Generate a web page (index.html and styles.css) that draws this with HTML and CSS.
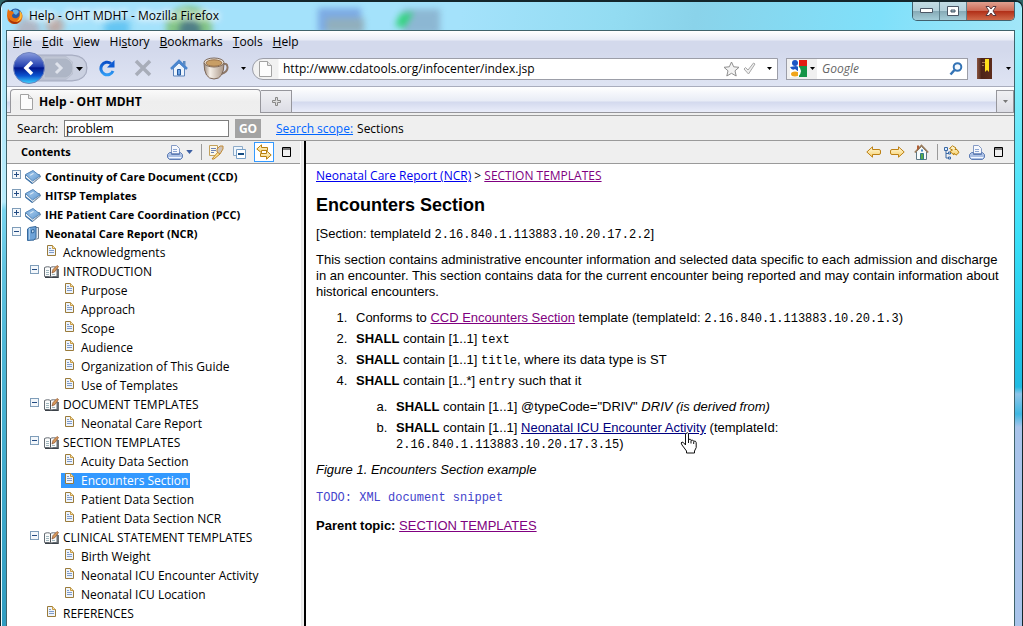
FILE: index.html
```html
<!DOCTYPE html>
<html lang="en">
<head>
<meta charset="utf-8">
<title>Help - OHT MDHT</title>
<link rel="stylesheet" href="styles.css">
</head>
<body>
<svg class="defs" aria-hidden="true">
  <defs>
    <linearGradient id="book-blue" x1="0" y1="0" x2="1" y2="1"><stop offset="0" stop-color="#7fb0de"/><stop offset=".5" stop-color="#8db9e3"/><stop offset="1" stop-color="#5e95cc"/></linearGradient>
    <linearGradient id="gold" x1="0" y1="0" x2="0" y2="1"><stop offset="0" stop-color="#fffbe0"/><stop offset="1" stop-color="#f7cf6a"/></linearGradient>
    <linearGradient id="reload-blue" x1="0" y1="0" x2="0" y2="1"><stop offset="0" stop-color="#0a50c8"/><stop offset="1" stop-color="#2f9bf5"/></linearGradient>
    <linearGradient id="back-blue" x1="0" y1="0" x2="0" y2="1"><stop offset="0" stop-color="#8c9ede"/><stop offset=".45" stop-color="#2340b0"/><stop offset=".5" stop-color="#03178c"/><stop offset=".75" stop-color="#0a54cf"/><stop offset="1" stop-color="#3fd8ff"/></linearGradient>
    <linearGradient id="brown" x1="0" y1="0" x2="1" y2="0"><stop offset="0" stop-color="#8a5540"/><stop offset=".3" stop-color="#4d2418"/><stop offset="1" stop-color="#5d2c1c"/></linearGradient>
    <linearGradient id="cup-body" x1="0" y1="0" x2="1" y2="0"><stop offset="0" stop-color="#9c8a7c"/><stop offset=".3" stop-color="#f5efe8"/><stop offset="1" stop-color="#a99585"/></linearGradient>
  </defs>
  <symbol id="i-book" viewBox="0 0 16 14"><path d="M.5 5v3l7 5.500 8-6.500-1-2.500z" fill="#f2f4f6" stroke="#5d7e9e"/><path d="m.5 8 7 5.500" stroke="#3d74ab" stroke-width="1.300"/><path d="M.5 4.500 8 .5l7 5.500-7.500 5z" fill="url(#book-blue)" stroke="#5588bb"/><path d="m4.500 5 3.500-2 1 .8-3.500 2z" fill="#dceaf7"/><path d="m8.500 12 6-4.500" stroke="#9aa7b5" fill="none"/></symbol>
  <symbol id="i-bookopen" viewBox="0 0 12 15"><path d="M6.500 1.500h5v11l-6 1.500z" fill="#e4e9ef" stroke="#707d8c"/><path d="m.5 3 2-1.500L9 .5v11L7 14 .5 14.500z" fill="#6ea3d8" stroke="#37699c"/><path d="M2.500 2v11.500" stroke="#a9cbea"/><path d="M4.500 4 7 3.500v3l-2.500.5z" fill="#c7def3" stroke="#37699c"/></symbol>
  <symbol id="i-page" viewBox="0 0 9 11"><path d="M.5.5h5l3 3v7h-8z" fill="#eef4fc" stroke="#9a7b3a"/><path d="M5.500.5v3h3" fill="#f5e3ad" stroke="#c79a46"/><path d="M2 5.500h5M2 7.500h5M2 3.500h2" stroke="#7f9bc9"/></symbol>
  <symbol id="i-toc" viewBox="0 0 15 13"><path d="M1 12.500h5.500l1 .5 1-.5H14V4" stroke="#3b4148" stroke-width="1.500" fill="none"/><path d="M.5 2.500c2-1 4.500-1 6 0 1.500-1 4-1 6.500 0v9H8.500l-1.500.5-1.500-.5h-5z" fill="#fafbfb" stroke="#666c73"/><path d="M6.500 2.500v9" stroke="#4e5055"/><path d="M2 5.500h3M2 7.500h3M2 9.500h3M8 9.500h3" stroke="#9fb6bd"/><path d="m8 8 1-3.500L13 .5l1.500 1-3.500 5z" fill="#d99a5b" stroke="#89502c" stroke-width=".7"/></symbol>
  <symbol id="i-print" viewBox="0 0 16 15"><path d="M4.500.5h5l3 3v5h-8z" fill="#f6f8fd" stroke="#849ac4"/><path d="M6 4.500h4M6 6.500h4" stroke="#8ba6d3"/><path d="M2.500 7.500h2v2h8v-2h1l2 2v3l-2 2H2.500l-2-2v-3z" fill="#abc0e4" stroke="#5f7db4"/><path d="M2 12.500h12" stroke="#f4f8ff"/></symbol>
  <symbol id="i-left" viewBox="0 0 15 12"><path d="M6.500.8v2.700h6.500q1.500 0 1.500 1.500v2q0 1.500-1.500 1.500H6.500v2.700L.8 6z" fill="url(#gold)" stroke="#bd8115"/></symbol>
  <symbol id="i-right" viewBox="0 0 15 12"><path d="M8.500.8v2.700H2Q.5 3.500.5 5v2Q.5 8.500 2 8.500h6.500v2.700L14.200 6z" fill="url(#gold)" stroke="#bd8115"/></symbol>
  <symbol id="i-max" viewBox="0 0 9 10"><path d="M.5.5h8v9h-8zM1 2h7" fill="none" stroke="#000"/></symbol>
  <symbol id="i-drop" viewBox="0 0 5 3"><path d="M0 0h5L2.500 3z" fill="currentColor"/></symbol>
  <symbol id="i-sheet" viewBox="0 0 13 16"><path d="M.5.5h8l4 4v11H.5z" fill="#fcfcfc" stroke="#a2a2a2"/><path d="M8.500.5v4h4" fill="#e6e6e6" stroke="#a2a2a2"/></symbol>
</svg>

<div class="window">
  <header class="titlebar">
    <svg class="blobs" width="480" height="30" aria-hidden="true">
      <g class="soft"><circle cx="28" cy="30" r="12" fill="#b4a9b4"/><circle cx="55" cy="26" r="9" fill="#c49b8f"/><circle cx="117" cy="28" r="13" fill="#51bdf0"/><circle cx="189" cy="29" r="23" fill="#79bc60"/><circle cx="190" cy="30" r="11" fill="#335e60"/><path d="M318 8h43v25h-43z" fill="#6f98dd"/><path d="M326 18h38v15h-38z" fill="#8b9ea9"/><path d="M403 9h37v25h-37z" fill="#85a9c6"/><path d="m395 26 5-12 14-2-10 16z" fill="#10cf58"/></g>
    </svg>
    <svg class="fox" viewBox="0 0 16 16" width="16" height="16" aria-hidden="true"><circle cx="8.500" cy="7" r="6.500" fill="#285aa6"/><path d="M6 2q4-1.500 6 2l-3 3-3-2z" fill="#67b5e6"/><path d="M1 1q1 2 3 2 2 0 3 2l-2 2q0 4 5 3 4-2 2-7 4 2 3.500 6-1 7-8 7T0 8Q0 4 1 1z" fill="#e8700f"/><path d="M1 8q1 5 7 6 4 0 6-4-1 6-7 6-5-1-6-8z" fill="#a93408"/><path d="M13 3q3 3 1 8-2 3-5 3 5-3 4-11z" fill="#ffc03b"/></svg>
    <span class="caption">Help - OHT MDHT - Mozilla Firefox</span>
    <div class="winctl">
      <button class="wbtn" aria-label="Minimize"><svg width="13" height="6"><path d="M.5.5h12v4H.5z" fill="#fff" stroke="#4b5766"/></svg></button>
      <button class="wbtn" aria-label="Maximize"><svg width="12" height="10"><path d="M.5.5h11v9H.5zM4 4h4v2H4z" fill="#fff" stroke="#4b5766" fill-rule="evenodd"/></svg></button>
      <button class="wbtn close" aria-label="Close"><svg width="12" height="10"><path d="M1 .5h3l2 2.500 2-2.500h3L8 5l3 4.500H8L6 7 4 9.500H1L4 5z" fill="#fff" stroke="#573940"/></svg></button>
    </div>
  </header>

  <div class="client">
    <nav class="menubar">
      <button><u>F</u>ile</button><button><u>E</u>dit</button><button><u>V</u>iew</button><button>Hi<u>s</u>tory</button><button><u>B</u>ookmarks</button><button><u>T</u>ools</button><button><u>H</u>elp</button>
    </nav>

    <div class="navbar">
      <div class="navbtns">
        <button aria-label="Back and forward"><svg width="78" height="34" viewBox="0 0 78 34"><path d="M16 4h46q15 1 15 13T62 30H16z" fill="#b9bfd0" stroke="#a5abc0"/><path d="M50 29h12q14-1 14-12T62 5H56l7 6v12l-7 6z" fill="#cbd1e1"/><path d="M34 7h22q7 3 7 10t-7 10H34z" fill="#aeb6c6" stroke="#c4cad7"/><path d="m46 12 5 5-5 5" fill="none" stroke="#dfe3ec" stroke-width="3"/><path d="M66 16h7l-3.500 4z"/><circle cx="19" cy="17" r="15.500" fill="url(#back-blue)" stroke="#6f82bd"/><path d="m22 11-6 6 6 6" fill="none" stroke="#fff" stroke-width="3.500"/></svg></button>
        <button aria-label="Reload"><svg width="18" height="18" viewBox="0 0 18 18"><path d="M13 4.500A6.300 6.300 0 1 0 15 12" fill="none" stroke="url(#reload-blue)" stroke-width="3"/><path d="M16.500 1v7.500H9z" fill="#0d5bd2"/></svg></button>
        <button aria-label="Stop"><svg width="18" height="18" viewBox="0 0 18 18"><path d="m2 2 14 14M16 2 2 16" stroke="#a8adb9" stroke-width="3.500"/></svg></button>
        <button aria-label="Home"><svg width="18" height="18" viewBox="0 0 18 18"><path d="M3.500 9v8h11V9L9 4z" fill="#edf4fc" stroke="#5a82ba"/><path d="m1 10 8-8 8 8" fill="none" stroke="#4a86cf" stroke-width="2.500"/><path d="M13 2h2.500v5L13 4.500z" fill="#5d8ac0"/><path d="M7.500 10.500h3V16h-3z" fill="#6ca3e4" stroke="#24599f"/></svg></button>
        <button aria-label="Coffee"><svg width="26" height="23" viewBox="0 0 26 23"><path d="M19 8q5-3 5.500 2T18 17" fill="none" stroke="#8d7768" stroke-width="2"/><path d="M1 6q0 16 10 16T21 6z" fill="url(#cup-body)" stroke="#7b6759"/><ellipse cx="11" cy="5.500" rx="10" ry="4.500" fill="#efe8df" stroke="#7b6759"/><ellipse cx="11" cy="6" rx="8" ry="3.200" fill="#c89e65" stroke="#987048"/></svg></button>
        <button aria-label="Coffee menu"><svg width="5" height="3"><use href="#i-drop"/></svg></button>
      </div>
      <div class="address">
        <svg width="13" height="16"><use href="#i-sheet"/></svg>
        <input aria-label="Address" value="http://www.cdatools.org/infocenter/index.jsp">
        <svg width="17" height="16" viewBox="0 0 17 16"><path d="m8.500 1 2.200 4.800 5.300.5-4 3.500 1.200 5.200-4.700-2.700L3.800 15 5 9.800 1 6.300l5.300-.5z" fill="#f3f3f3" stroke="#8e8e8e"/></svg>
        <svg width="13" height="13" viewBox="0 0 13 13"><path d="m1 7 1.500-1.500L5 8l5.500-7L12 2 5.500 12z" fill="#efefef" stroke="#a6a6a6"/></svg>
        <svg class="addr-drop" width="5" height="3"><use href="#i-drop"/></svg>
      </div>
      <div class="gsearch">
        <button class="engine" aria-label="Search engine"><svg width="17" height="17" viewBox="0 0 17 17"><path d="M9 0h8v6H9z" fill="#e31b12"/><path d="M8 6h9v11H8z" fill="#159447"/><path d="M0 0h9v17H0z" fill="#fff"/><circle cx="5" cy="3" r="3" fill="#1d55c5"/><path d="M0 7q2 4 5 2l4 3V7L6 6z" fill="#1d55c5"/><ellipse cx="5" cy="14" rx="4" ry="2.500" fill="#f0a51c"/><path d="M8 6q3 2 3 5t-3 6z" fill="#fff"/></svg><svg width="5" height="3"><use href="#i-drop"/></svg></button>
        <input aria-label="Google" placeholder="Google">
        <svg width="14" height="14" viewBox="0 0 14 14"><circle cx="8.500" cy="5" r="3.800" fill="#f4f9ff" stroke="#3373b5" stroke-width="2"/><path d="m5.500 8-4 4.500" stroke="#3373b5" stroke-width="2.500"/></svg>
      </div>
      <button class="diary" aria-label="Bookmarks"><svg width="16" height="21" viewBox="0 0 16 21"><path d="M0 0h15v21H0z" fill="url(#brown)"/><path d="M5 4h3v1H5zm0 3h2v1H5z" fill="#a87b55"/><path d="M8 1h4v13l-2-2-2 2z" fill="#ffe11c"/></svg></button>
      <button aria-label="More"><svg width="5" height="3"><use href="#i-drop"/></svg></button>
    </div>

    <div class="tabbar">
      <button class="tab"><svg width="13" height="16"><use href="#i-sheet"/></svg>Help - OHT MDHT</button>
      <button class="newtab" aria-label="New tab"><svg width="9" height="9" viewBox="0 0 9 9"><path d="M3.500.5h2v3h3v2h-3v3h-2v-3h-3v-2h3z" fill="#ddd" stroke="#888"/></svg></button>
      <button class="alltabs" aria-label="All tabs"><svg width="5" height="3"><use href="#i-drop"/></svg></button>
    </div>

    <form class="searchbar" onsubmit="return false">
      <label for="q">Search:</label>
      <input id="q" value="problem">
      <button>GO</button>
      <a href="#scope">Search scope:</a>
      <span>Sections</span>
    </form>

    <div class="panes">
      <aside class="contents">
        <div class="toolbar">
          <h2>Contents</h2>
          <button aria-label="Print topics"><svg width="16" height="15"><use href="#i-print"/></svg><svg class="blue" width="7" height="4" viewBox="0 0 5 3"><use href="#i-drop"/></svg></button>
          <span class="sep"></span>
          <button aria-label="Search topics"><svg width="16" height="15" viewBox="0 0 16 15"><path d="M1.500.5h8v10h-8z" fill="#fbf7e9" stroke="#c3a15c"/><path d="M3 3.500h5M3 5.500h5M3 7.500h3" stroke="#6e83b5"/><path d="m4 14 6-7 2 2-6 5z" fill="#ffe38f" stroke="#bf862c"/><path d="m9 4 3-3h3v3l-3 5-3-2z" fill="#d0c3b5" stroke="#c18b38"/></svg></button>
          <button aria-label="Collapse all"><svg width="13" height="13" viewBox="0 0 13 13"><path d="M.5.5h9v9h-9z" fill="#eff6fd" stroke="#8eabc8"/><path d="M3.500 3.500h9v9h-9z" fill="#fff" stroke="#78a0c7"/><path d="M5 8h6" stroke="#164d83" stroke-width="2"/></svg></button>
          <button class="pressed" aria-label="Link with contents"><svg width="16" height="16" viewBox="0 0 16 16"><path d="M5.500.8v2.700h6v3h-6v2.300L.8 5z" fill="url(#gold)" stroke="#b8800e"/><path d="M10.500 6.800v2.700h-6v3h6v2.700l4.700-4.200z" fill="url(#gold)" stroke="#b8800e"/></svg></button>
          <button aria-label="Maximize contents"><svg width="9" height="10"><use href="#i-max"/></svg></button>
        </div>
        <ul class="tree">
          <li class="root"><button class="tw plus" aria-label="Expand"></button><svg width="16" height="14"><use href="#i-book"/></svg><a href="#ccd">Continuity of Care Document (CCD)</a></li>
          <li class="root"><button class="tw plus" aria-label="Expand"></button><svg width="16" height="14"><use href="#i-book"/></svg><a href="#hitsp">HITSP Templates</a></li>
          <li class="root"><button class="tw plus" aria-label="Expand"></button><svg width="16" height="14"><use href="#i-book"/></svg><a href="#ihe">IHE Patient Care Coordination (PCC)</a></li>
          <li class="root"><button class="tw" aria-label="Collapse"></button><svg width="16" height="15"><use href="#i-bookopen"/></svg><a href="#ncr">Neonatal Care Report (NCR)</a></li>
          <li class="leaf l2"><svg width="9" height="11"><use href="#i-page"/></svg><a href="#ack">Acknowledgments</a></li>
          <li class="group"><button class="tw" aria-label="Collapse"></button><svg width="15" height="13"><use href="#i-toc"/></svg><a href="#intro">INTRODUCTION</a></li>
          <li class="leaf"><svg width="9" height="11"><use href="#i-page"/></svg><a href="#purpose">Purpose</a></li>
          <li class="leaf"><svg width="9" height="11"><use href="#i-page"/></svg><a href="#approach">Approach</a></li>
          <li class="leaf"><svg width="9" height="11"><use href="#i-page"/></svg><a href="#scope-topic">Scope</a></li>
          <li class="leaf"><svg width="9" height="11"><use href="#i-page"/></svg><a href="#audience">Audience</a></li>
          <li class="leaf"><svg width="9" height="11"><use href="#i-page"/></svg><a href="#organization">Organization of This Guide</a></li>
          <li class="leaf"><svg width="9" height="11"><use href="#i-page"/></svg><a href="#use">Use of Templates</a></li>
          <li class="group"><button class="tw" aria-label="Collapse"></button><svg width="15" height="13"><use href="#i-toc"/></svg><a href="#document">DOCUMENT TEMPLATES</a></li>
          <li class="leaf"><svg width="9" height="11"><use href="#i-page"/></svg><a href="#report">Neonatal Care Report</a></li>
          <li class="group"><button class="tw" aria-label="Collapse"></button><svg width="15" height="13"><use href="#i-toc"/></svg><a href="#section">SECTION TEMPLATES</a></li>
          <li class="leaf"><svg width="9" height="11"><use href="#i-page"/></svg><a href="#acuity">Acuity Data Section</a></li>
          <li class="leaf"><span class="selected"><svg width="9" height="11"><use href="#i-page"/></svg><a href="#encounters">Encounters Section</a></span></li>
          <li class="leaf"><svg width="9" height="11"><use href="#i-page"/></svg><a href="#patient">Patient Data Section</a></li>
          <li class="leaf"><svg width="9" height="11"><use href="#i-page"/></svg><a href="#patient-ncr">Patient Data Section NCR</a></li>
          <li class="group"><button class="tw" aria-label="Collapse"></button><svg width="15" height="13"><use href="#i-toc"/></svg><a href="#clinical">CLINICAL STATEMENT TEMPLATES</a></li>
          <li class="leaf"><svg width="9" height="11"><use href="#i-page"/></svg><a href="#birth">Birth Weight</a></li>
          <li class="leaf"><svg width="9" height="11"><use href="#i-page"/></svg><a href="#activity">Neonatal ICU Encounter Activity</a></li>
          <li class="leaf"><svg width="9" height="11"><use href="#i-page"/></svg><a href="#location">Neonatal ICU Location</a></li>
          <li class="leaf l2"><svg width="9" height="11"><use href="#i-page"/></svg><a href="#references">REFERENCES</a></li>
        </ul>
      </aside>
      <div class="divider"></div>
      <main class="topic">
        <div class="toolbar topicbar">
          <button aria-label="Go back"><svg width="15" height="12"><use href="#i-left"/></svg></button>
          <button aria-label="Go forward"><svg width="15" height="12"><use href="#i-right"/></svg></button>
          <button aria-label="Home"><svg width="15" height="16" viewBox="0 0 15 16"><path d="M2.500 7.500v8h10v-8l-5-5z" fill="#f7fbfb" stroke="#5f7885"/><path d="m.8 8.500 6.700-7 6.700 7" fill="none" stroke="#9a7d5e" stroke-width="1.800"/><path d="M3 1.500h2v3L3 6.500z" fill="#b05e35"/><path d="M6.500 9.500h3v6h-3z" fill="#5baa46" stroke="#2e7b8b"/><path d="M7 5.500h2v2H7z" fill="#4584c2"/></svg></button>
          <span class="sep"></span>
          <button aria-label="Show in contents"><svg width="16" height="15" viewBox="0 0 16 15"><path d="M2 4v9h4M2 8.500h4" fill="none" stroke="#3a69a5"/><path d="M.5 2.500h3v3h-3zM4.500 7h2v2h-2zM4.500 12h2v2h-2z" fill="#dcecff" stroke="#3a69a5"/><path d="M8.500.8 12 3l-1 1.500h2l2 3-3 2.700-2-2V10L6 6.500 8.500 5 5.500 3.500z" fill="url(#gold)" stroke="#b8800e"/></svg></button>
          <button aria-label="Print page"><svg width="16" height="15"><use href="#i-print"/></svg></button>
          <button aria-label="Maximize topic"><svg width="9" height="10"><use href="#i-max"/></svg></button>
        </div>
        <article>
          <nav class="crumbs"><a href="#ncr">Neonatal Care Report (NCR)</a> &gt; <a class="visited" href="#section">SECTION TEMPLATES</a></nav>
          <h1>Encounters Section</h1>
          <p>[Section: templateId <code>2.16.840.1.113883.10.20.17.2.2</code>]</p>
          <p>This section contains administrative encounter information and selected data specific to each admission and discharge in an encounter. This section contains data for the current encounter being reported and may contain information about historical encounters.</p>
          <ol>
            <li>Conforms to <a class="visited" href="#ccd-enc">CCD Encounters Section</a> template (templateId: <code>2.16.840.1.113883.10.20.1.3</code>)</li>
            <li><b>SHALL</b> contain [1..1] <code>text</code></li>
            <li><b>SHALL</b> contain [1..1] <code>title</code>, where its data type is ST</li>
            <li><b>SHALL</b> contain [1..*] <code>entry</code> such that it
              <ol type="a">
                <li><b>SHALL</b> contain [1..1] @typeCode="DRIV" <i>DRIV (is derived from)</i></li>
                <li><b>SHALL</b> contain [1..1] <span class="hovered"><a class="dark" href="#activity">Neonatal ICU Encounter Activity</a><svg class="hand" width="18" height="22" viewBox="0 0 18 22" aria-hidden="true"><path d="M6 1.500q1.500-1.500 2.500 0v6q2-1 2.500.8 2-.8 2.500.8 2.500-.5 2.700 1.500v5L14.500 19v2h-8v-2L2 13q-1.700-2.500 0-3 1.500 0 3.500 3V2z" fill="#fff" stroke="#111"/><path d="M8.500 7v4M11 8.500v3M13.700 9.500v2.500" stroke="#111"/></svg></span> (templateId:<br><code>2.16.840.1.113883.10.20.17.3.15</code>)</li>
              </ol>
            </li>
          </ol>
          <p><i>Figure 1. Encounters Section example</i></p>
          <pre>TODO: XML document snippet</pre>
          <p><b>Parent topic:</b> <a class="visited" href="#section">SECTION TEMPLATES</a></p>
        </article>
      </main>
    </div>
  </div>
</div>
</body>
</html>
```
FILE: styles.css
```css
* { box-sizing: border-box; }

body {
  margin: 0;
  background: #2f6668;
  color: #000;
  font: 12px/16px "Open Sans", "Segoe UI", sans-serif;
}

button {
  margin: 0;
  padding: 0;
  border: 0;
  background: none;
  color: inherit;
  font: inherit;
  display: flex;
  align-items: center;
  justify-content: center;
}

input { font: inherit; padding: 0; border: 0; min-width: 0; outline: 0; }
svg { display: block; flex: none; }
.defs { position: absolute; width: 0; height: 0; }

.window {
  height: 100vh;
  overflow: hidden;
  display: flex;
  flex-direction: column;
  border: 1px solid #14262b;
  border-width: 2px 1px 0 1px;
  border-radius: 8px 8px 0 0;
  box-shadow: inset 1px 1px #e9fbff;
  padding: 0 7px 0 5px;
  background:
    linear-gradient(#a5f3fb, #38dff8 240px, #20c4e6 340px, #20bbe2 385px, #8fc4e8 392px, #3fb8e2 412px, #a9c4ea 425px, #a9c4ea) right / 8px 100% no-repeat,
    linear-gradient(#a9e4fb, #b9ecfb 200px, #79d5ef 208px, #5fc3e0 270px, #4eb8d8 340px, #2f9cc0) left / 6px 100% no-repeat,
    #a5e4fb;
}

/* title bar */
.titlebar {
  position: relative;
  flex: none;
  height: 28px;
  margin: 0 -6px 0 -4px;
  padding-left: 5px;
  display: flex;
  align-items: center;
  background: linear-gradient(100deg, #a4e2fb 45%, #93dcf2 60%, #8ad3ea 68%, #7fe0fa 86%, #a2e6f8);
}
.blobs { position: absolute; left: -2px; top: -2px; }
.soft { filter: blur(3px); opacity: .75; }
.fox { position: relative; }
.caption { position: relative; margin-left: 6px; text-shadow: 0 0 6px #fff, 0 0 6px #fff, 0 0 10px #fff; }
.winctl {
  margin-left: auto;
  margin-right: 6px;
  align-self: flex-start;
  display: flex;
  height: 19px;
  border: 1px solid #41606d;
  border-top: 0;
  border-radius: 0 0 5px 5px;
  overflow: hidden;
}
.wbtn { width: 27px; border-right: 1px solid #5d7f8b; background: linear-gradient(#c3dce4, #b2d0da 48%, #85a9b5 50%, #a5cdd8); }
.close { width: 47px; border: 0; background: linear-gradient(#e0a090, #cc6a55 48%, #b02d16 50%, #d06a4a); }

/* browser chrome */
.client {
  flex: 1;
  min-height: 0;
  display: flex;
  flex-direction: column;
  border: 1px solid #3f636b;
  border-bottom: 0;
  background: #fff;
}
.menubar {
  flex: none;
  height: 20px;
  padding: 1px 0 0 6px;
  display: flex;
  gap: 10px;
  background: linear-gradient(#fff, #e9ecf6 9px, #d3d9ec 10px);
}
.menubar button { display: block; white-space: pre; }
.navbar {
  flex: none;
  height: 36px;
  padding: 0 3px;
  display: flex;
  align-items: center;
  background: linear-gradient(#d3d9ec, #dfe4f3);
  border-bottom: 1px solid #a9adbd;
}
.navbtns { display: flex; align-items: center; flex: none; width: 242px; gap: 18px; padding-bottom: 1px; }
.navbtns button:nth-child(1) { margin-right: -8px; }
.navbtns button:nth-child(5) { margin-left: -3px; }
.navbtns button:nth-child(6) { margin-left: -6px; }
.address {
  flex: 1;
  min-width: 0;
  height: 22px;
  border: 1px solid #9c9ea8;
  border-radius: 11px 0 0 11px;
  background: linear-gradient(90deg, #f1f1f1 25px, #fff 26px);
  display: flex;
  align-items: center;
  gap: 3px;
  padding: 0 5px 0 6px;
}
.address input { flex: 1; margin-left: 8px; background: none; }
.addr-drop { margin-left: 8px; }
.gsearch {
  flex: none;
  width: 182px;
  height: 22px;
  margin: 0 9px 0 8px;
  display: flex;
  align-items: center;
  background: #fff;
  border: 1px solid #9c9ea8;
  padding-right: 4px;
}
.engine { width: 30px; height: 20px; gap: 3px; background: #f0f0f0; }
.gsearch input { flex: 1; width: 60px; margin-left: 5px; font-style: italic; }
.gsearch input::placeholder { color: #666; opacity: 1; }
.diary { margin-right: 13px; }

.tabbar {
  flex: none;
  height: 26px;
  padding: 2px 0 0 3px;
  display: flex;
  background: linear-gradient(#fff, #e8ecf6 14px, #d3d9ee 15px, #eaedfa 25px);
  box-shadow: inset 0 -1px #96969c;
}
.tabbar button { border: 1px solid #96969c; border-bottom: 0; }
.tabbar .tab {
  width: 251px;
  justify-content: flex-start;
  gap: 6px;
  padding-left: 9px;
  border-radius: 4px 4px 0 0;
  background: linear-gradient(#fafafa, #eee 50%, #efefef);
  font-weight: bold;
}
.tabbar .newtab, .tabbar .alltabs { height: 23px; margin-top: 1px; background: linear-gradient(#f0f0f3, #dcdde5); border-bottom: 1px solid #96969c; }
.tabbar .newtab { width: 31px; border-left: 0; }
.tabbar .alltabs { width: 18px; margin-left: auto; color: #777; }

.searchbar {
  flex: none;
  height: 28px;
  margin: 0;
  padding: 4px 10px 0;
  display: flex;
  align-items: center;
  background: #efefef;
  box-shadow: inset 0 2px #efefef, inset 0 3px #9a9a9a;
  border-bottom: 1px solid #9a9a9a;
}
.searchbar label { width: 47px; }
.searchbar input { width: 165px; height: 17px; border: 1px solid #7d7d7d; background: #fff; padding-left: 1px; }
.searchbar button { width: 26px; height: 19px; margin: 0 15px 0 6px; background: #a3a3a3; color: #fff; font-weight: bold; }
.searchbar a { color: #0066ff; margin-right: 4px; }

/* panes */
.panes { flex: 1; min-height: 0; display: flex; }
.contents { flex: 0 0 293px; min-width: 0; }
.divider { flex: none; width: 6px; background: linear-gradient(90deg, #fff 1px, #e4e4e4 1px, #f5f5f5 4px, #000 4px); }
.topic { flex: 1; min-width: 0; }
.toolbar {
  height: 23px;
  display: flex;
  align-items: center;
  gap: 9px;
  padding-right: 9px;
  background: #efefef;
  border-bottom: 1px solid #9a9a9a;
}
.toolbar h2 { margin: 0 auto 0 14px; font-size: 11px; line-height: 16px; }
.toolbar button { gap: 3px; }
.sep { width: 1px; height: 16px; background: #9a9a9a; margin: 0 -3px 0 -1px; }
.blue { color: #3c5fa3; }
.toolbar .pressed { width: 20px; height: 20px; margin: 0 -1px; background: #fff; border: 1px solid #3399ff; }
.topicbar { justify-content: flex-end; padding-right: 11px; }

.tree { list-style: none; margin: 0; padding: 3px 0 0; }
.tree li { height: 19px; display: flex; align-items: center; white-space: nowrap; }
.tree a { color: #000; text-decoration: none; }
.tree svg, .tree .tw { margin-bottom: 5px; }
.tree .root { padding-left: 5px; font-size: 11px; font-weight: bold; }
.root svg { margin: 0 4px; }
.group { padding-left: 23px; }
.group svg { margin: 0 4px 0 5px; }
.leaf { padding-left: 58px; }
.leaf svg { margin-right: 7px; }
.l2 { padding-left: 40px; }
.tw {
  width: 9px;
  height: 9px;
  border: 1px solid #7f9db9;
  background: linear-gradient(#234b82, #234b82) center / 5px 1px no-repeat, #f3f7fb;
}
.plus { background: linear-gradient(#234b82, #234b82) center / 5px 1px no-repeat, linear-gradient(#234b82, #234b82) center / 1px 5px no-repeat, #f3f7fb; }
.selected { display: flex; align-items: center; height: 15px; margin-left: -4px; padding: 0 2px 0 4px; background: #3399ff; }
.selected a { color: #fff; }

/* topic */
article { padding: 4px 10px; font: 13px/16px "Liberation Sans", Arial, sans-serif; }
.crumbs { font: 12px/16px "Open Sans", "Segoe UI", sans-serif; }
article a { color: #0000ee; }
article a.visited { color: #800080; }
article a.dark { color: #000080; }
h1 { margin: 11px 0 10px; font-size: 18px; line-height: 21px; }
article p { margin: 0 0 10px; }
code { font: 12px/12px "Liberation Mono", "Courier New", monospace; }
article ol { margin: 0 0 10px; padding-left: 35px; }
article ol li { margin-bottom: 5px; padding-left: 5px; }
article ol ol { margin: 10px 0 0; }
pre { margin: 12px 0; color: #4444cc; font: 12px/16px "Liberation Mono", "Courier New", monospace; }
.hovered { position: relative; }
.hand { position: absolute; right: 8px; top: 12px; }
```
